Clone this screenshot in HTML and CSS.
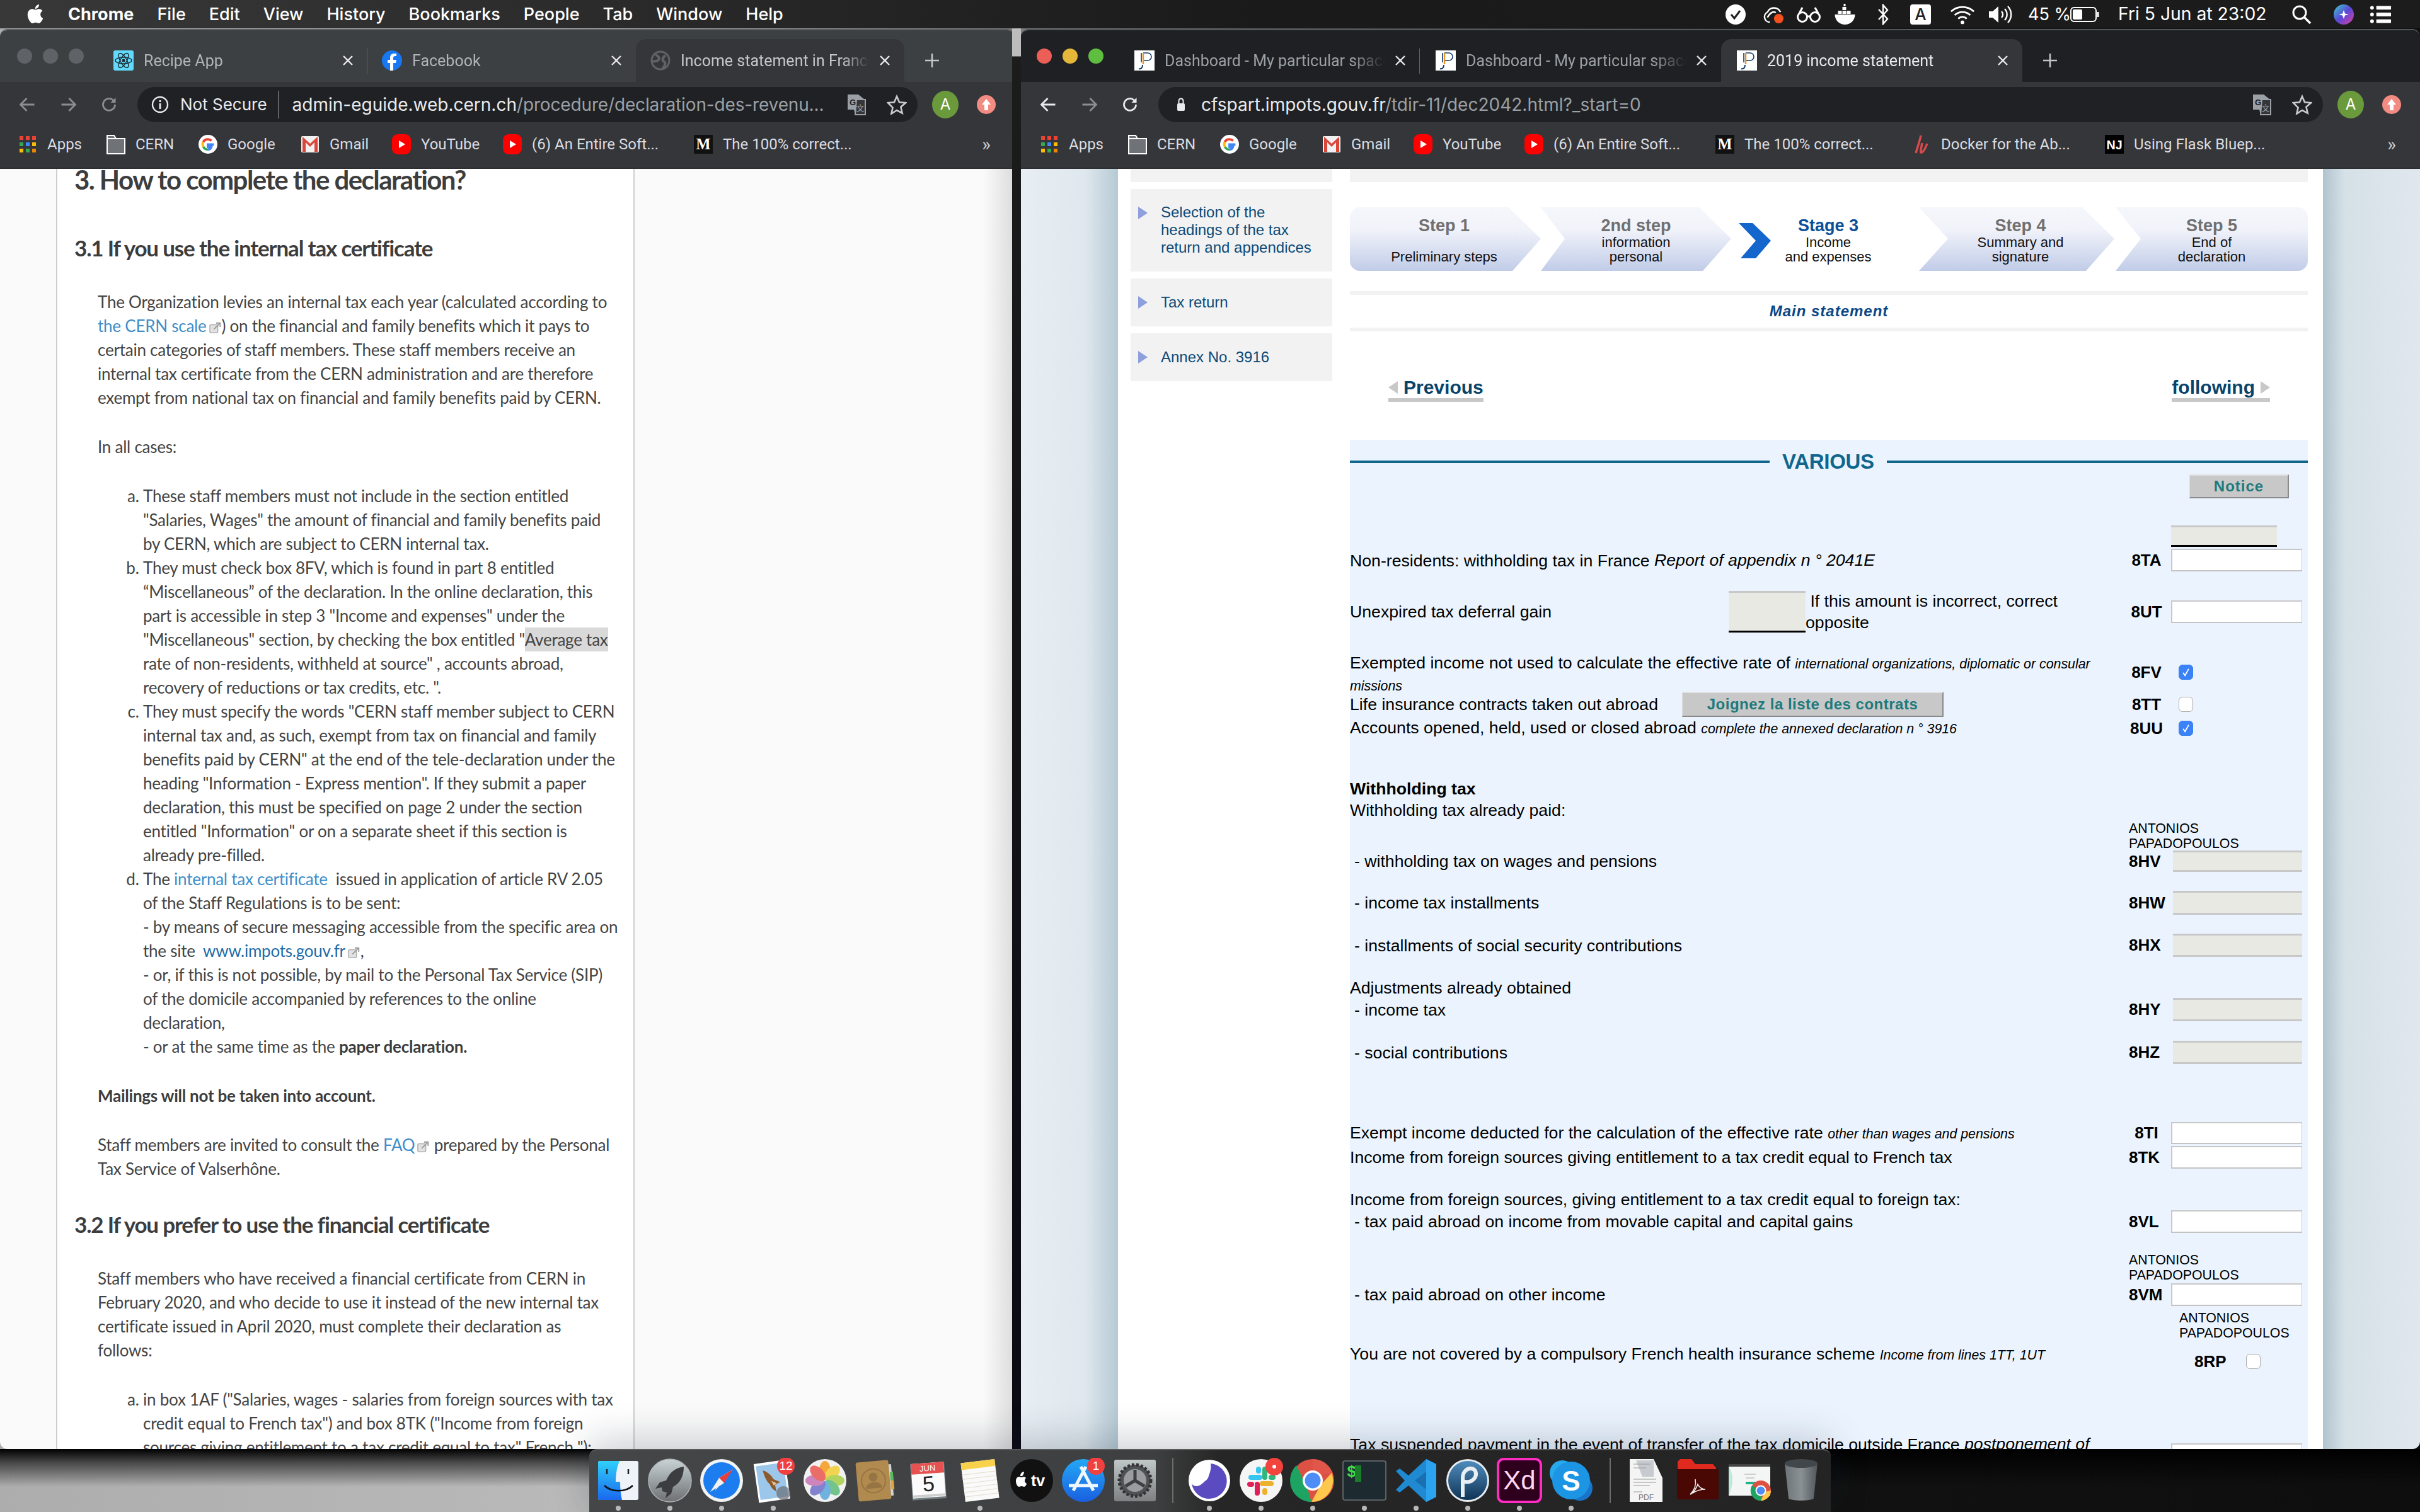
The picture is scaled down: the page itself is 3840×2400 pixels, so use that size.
FILE: index.html
```html
<!DOCTYPE html>
<html lang="en">
<head>
<meta charset="utf-8">
<title>Chrome windows</title>
<link rel="stylesheet" href="styles.css">
</head>
<body>
<svg class="defs" xmlns="http://www.w3.org/2000/svg">
  <symbol id="i-imp" viewBox="0 0 32 32"><rect width="32" height="32" fill="#fff"/><path d="M14 4h7a5 5 0 0 1 0 12h-7" fill="none" stroke="#123a6b" stroke-width="1.600"/><path d="M11 4v15" stroke="#123a6b" stroke-width="1.600"/><path d="M14 4v18" stroke="#e8951f" stroke-width="2.400"/><path d="M7 29c3 1 6-1 6-6" fill="none" stroke="#123a6b" stroke-width="2"/></symbol>
  <symbol id="i-x" viewBox="0 0 20 20"><path d="M3 3l14 14M17 3L3 17" stroke="currentColor" stroke-width="2.400" fill="none"/></symbol>
  <symbol id="i-plus" viewBox="0 0 26 26"><path d="M13 2v22M2 13h22" stroke="currentColor" stroke-width="2.600"/></symbol>
  <symbol id="i-back" viewBox="0 0 28 28"><path d="M25 14H4M13 4L3 14l10 10" fill="none" stroke="currentColor" stroke-width="2.800"/></symbol>
  <symbol id="i-fwd" viewBox="0 0 28 28"><path d="M3 14h21M15 4l10 10-10 10" fill="none" stroke="currentColor" stroke-width="2.800"/></symbol>
  <symbol id="i-reload" viewBox="0 0 28 28"><path d="M23 14a9.500 9.500 0 1 1-3-7l3 3" fill="none" stroke="currentColor" stroke-width="2.800"/><path d="M24 3v8h-8z" fill="currentColor"/></symbol>
  <symbol id="i-star" viewBox="0 0 32 32"><path d="M16 3l4 9.300 10 .9-7.600 6.600 2.300 9.800L16 25l-8.700 5.600 2.300-9.800L2 13.200l10-.9z" fill="none" stroke="currentColor" stroke-width="2.600"/></symbol>
  <symbol id="i-up" viewBox="0 0 30 30"><circle cx="15" cy="15" r="15" fill="#f28b82"/><path d="M15 6l7 9h-4v9h-6v-9H8z" fill="#fff"/></symbol>
  <symbol id="i-grid" viewBox="0 0 26 26"><g fill="#ea4335"><rect width="6" height="6"/><rect x="10" width="6" height="6"/><rect x="20" width="6" height="6"/></g><g><rect y="10" width="6" height="6" fill="#34a853"/><rect x="10" y="10" width="6" height="6" fill="#4285f4"/><rect x="20" y="10" width="6" height="6" fill="#fbbc04"/></g><g><rect y="20" width="6" height="6" fill="#fbbc04"/><rect x="10" y="20" width="6" height="6" fill="#34a853"/><rect x="20" y="20" width="6" height="6" fill="#ea8600"/></g></symbol>
  <symbol id="i-folder" viewBox="0 0 30 32"><path d="M1 2h11l3 5h14v24H1z" fill="#6f7377" stroke="#fff" stroke-width="2"/><path d="M1 7h28" stroke="#fff" stroke-width="2"/></symbol>
  <symbol id="i-g" viewBox="0 0 32 32"><circle cx="16" cy="16" r="16" fill="#fff"/><path d="M26 16.500H16v4h5.700c-.7 2.500-3 4.300-5.700 4.300" fill="none" stroke="#4285f4" stroke-width="4"/><path d="M16 25a9 9 0 0 1-8-5" fill="none" stroke="#34a853" stroke-width="4"/><path d="M8 20a9 9 0 0 1 0-8" fill="none" stroke="#fbbc04" stroke-width="4"/><path d="M8 12a9 9 0 0 1 14-2" fill="none" stroke="#ea4335" stroke-width="4"/></symbol>
  <symbol id="i-gm" viewBox="0 0 28 32"><rect y="3" width="28" height="26" rx="2" fill="#f1f1f1"/><path d="M2 4l12 11L26 4v24h-5V13l-7 7-7-7v15H2z" fill="#d9473a"/></symbol>
  <symbol id="i-yt" viewBox="0 0 30 32"><rect width="30" height="32" rx="9" fill="#f00"/><path d="M11 10l10 6-10 6z" fill="#fff"/></symbol>
  <symbol id="i-doc" viewBox="0 0 30 32"><path d="M14 2C12 12 8 22 6 30M16 14c-1 6-3 12-2 15 3 1 7-6 10-14" fill="none" stroke="#d64b4b" stroke-width="3.500"/></symbol>
  <symbol id="i-ext" viewBox="0 0 22 22"><rect x="1" y="6" width="14" height="14" rx="2" fill="#e2e2e2" stroke="#aaa" stroke-width="1.500"/><path d="M8 14L19 3M12 3h7v7" fill="none" stroke="#999" stroke-width="2"/></symbol>
  <symbol id="i-chk" viewBox="0 0 24 24"><path d="M7 13l3.500 5L17 6" fill="none" stroke="#fff" stroke-width="2"/></symbol>
</svg>

<header class="menubar">
  <svg class="apple" viewBox="0 0 24 24"><path fill="#fff" d="M12.152 6.896c-.948 0-2.415-1.078-3.96-1.04-2.04.027-3.91 1.183-4.961 3.014-2.117 3.675-.546 9.103 1.519 12.09 1.013 1.454 2.208 3.09 3.792 3.039 1.52-.065 2.09-.987 3.935-.987 1.831 0 2.35.987 3.96.948 1.637-.026 2.676-1.48 3.676-2.948 1.156-1.688 1.636-3.325 1.662-3.415-.039-.013-3.182-1.221-3.22-4.857-.026-3.04 2.48-4.494 2.597-4.559-1.429-2.09-3.623-2.324-4.39-2.376-2-.156-3.675 1.09-4.61 1.09zM15.53 3.83c.843-1.012 1.4-2.427 1.245-3.83-1.207.052-2.662.805-3.532 1.818-.78.896-1.454 2.338-1.273 3.714 1.338.104 2.715-.688 3.559-1.701"/></svg>
  <nav class="menus">
    <span class="app">Chrome</span><span>File</span><span>Edit</span><span>View</span><span>History</span><span>Bookmarks</span><span>People</span><span>Tab</span><span>Window</span><span>Help</span>
  </nav>
  <div class="status">
    <svg class="s32" viewBox="0 0 32 32"><circle cx="16" cy="16" r="16" fill="#fff"/><path d="M9 16l5 6 9-12" fill="none" stroke="#222" stroke-width="3"/></svg>
    <svg class="s38" viewBox="0 0 38 34"><path d="M14 30a9 9 0 0 1-4-17 12 12 0 0 1 22 0" fill="none" stroke="#fff" stroke-width="2.600"/><path d="M10 22c4-8 10-11 14-8" fill="none" stroke="#fff" stroke-width="2.600"/><circle cx="29" cy="24" r="8" fill="#f4511e"/></svg>
    <svg class="s38" viewBox="0 0 40 32"><circle cx="10" cy="20" r="7.500" fill="none" stroke="#fff" stroke-width="3"/><circle cx="30" cy="20" r="7.500" fill="none" stroke="#fff" stroke-width="3"/><path d="M17 19h6M5 14L10 5M35 14L30 5" stroke="#fff" stroke-width="3" fill="none"/></svg>
    <svg class="s34" viewBox="0 0 34 34"><path d="M1 17h32c0 9-7 16-16 16S1 26 1 17z" fill="#fff"/><g fill="#fff"><rect x="6" y="11" width="6" height="5"/><rect x="13" y="11" width="6" height="5"/><rect x="20" y="11" width="6" height="5"/><rect x="13" y="5" width="6" height="5"/><rect x="15" y="0" width="3" height="4"/></g></svg>
    <svg class="s20" viewBox="0 0 20 34"><path d="M3 9l14 15-7 8V2l7 8L3 25" fill="none" stroke="#fff" stroke-width="2.400"/></svg>
    <span class="abox">A</span>
    <svg class="s38" viewBox="0 0 42 32"><path d="M2 11a28 28 0 0 1 38 0M8 17a19 19 0 0 1 26 0M14 23a10 10 0 0 1 14 0" fill="none" stroke="#fff" stroke-width="3"/><circle cx="21" cy="29" r="3" fill="#fff"/></svg>
    <svg class="s38" viewBox="0 0 40 32"><path d="M2 11h6l9-8v26l-9-8H2z" fill="#fff"/><path d="M22 11a7 7 0 0 1 0 10M27 7a13 13 0 0 1 0 18M32 3a19 19 0 0 1 0 26" fill="none" stroke="#fff" stroke-width="2.400"/></svg>
    <span class="st-txt">45 %</span>
    <svg class="s44" viewBox="0 0 46 24"><rect x="1" y="1" width="40" height="22" rx="5" fill="none" stroke="#fff" stroke-width="2"/><rect x="4" y="4" width="15" height="16" rx="2" fill="#fff"/><path d="M44 8v8" stroke="#fff" stroke-width="3"/></svg>
    <span class="st-txt time">Fri 5 Jun at 23:02</span>
    <svg class="s32" viewBox="0 0 32 32"><circle cx="13" cy="13" r="10" fill="none" stroke="#fff" stroke-width="3"/><path d="M20 20l10 10" stroke="#fff" stroke-width="3.600"/></svg>
    <svg class="s32" viewBox="0 0 32 32"><defs><linearGradient id="siri" x1="0" y1="0" x2="1" y2="1"><stop offset="0" stop-color="#3ad0c8"/><stop offset=".5" stop-color="#5a48d8"/><stop offset="1" stop-color="#e0409c"/></linearGradient></defs><circle cx="16" cy="16" r="16" fill="url(#siri)"/><path d="M16 9l2 5.500 6 1.500-6 1.500-2 5.500-2-5.500-6-1.500 6-1.500z" fill="#fff"/></svg>
    <svg class="s34" viewBox="0 0 36 32"><g fill="#fff"><circle cx="4" cy="5" r="3"/><circle cx="4" cy="16" r="3"/><circle cx="4" cy="27" r="3"/><rect x="11" y="2" width="24" height="6" rx="1"/><rect x="11" y="13" width="24" height="6" rx="1"/><rect x="11" y="24" width="24" height="6" rx="1"/></g></svg>
  </div>
</header>

<main class="desktop">
  <section class="win win-left">
    <div class="strip">
      <div class="lights grey"><i></i><i></i><i></i></div>
      <div class="tab sep">
        <svg class="fav" viewBox="0 0 32 32"><rect width="32" height="32" rx="3" fill="#61dafb"/><g fill="none" stroke="#1c2b33" stroke-width="1.400"><ellipse cx="16" cy="16" rx="13" ry="5"/><ellipse cx="16" cy="16" rx="13" ry="5" transform="rotate(60 16 16)"/><ellipse cx="16" cy="16" rx="13" ry="5" transform="rotate(120 16 16)"/></g><circle cx="16" cy="16" r="2.500" fill="#1c2b33"/></svg>
        <span class="tab-t">Recipe App</span><svg class="x"><use href="#i-x"/></svg>
      </div>
      <div class="tab">
        <svg class="fav" viewBox="0 0 32 32"><circle cx="16" cy="16" r="16" fill="#1877f2"/><path d="M18 32V20h4l1-5h-5v-3c0-2 1-3 3-3h2V5h-4c-4 0-6 3-6 6v4h-4v5h4v12z" fill="#fff"/></svg>
        <span class="tab-t">Facebook</span><svg class="x"><use href="#i-x"/></svg>
      </div>
      <div class="tab active">
        <svg class="fav" viewBox="0 0 32 32"><circle cx="16" cy="16" r="14" fill="none" stroke="#5f6368" stroke-width="3"/><path d="M8 7c5 2 7 5 5 8s-6 1-10 3M24 8c-5 3-6 8-2 10 3 2 1 7-3 11" fill="none" stroke="#5f6368" stroke-width="4"/></svg>
        <span class="tab-t">Income statement in France</span><svg class="x"><use href="#i-x"/></svg>
      </div>
      <svg class="plus"><use href="#i-plus"/></svg>
    </div>
    <div class="toolbar">
      <svg class="nav dim"><use href="#i-back"/></svg><svg class="nav dim"><use href="#i-fwd"/></svg><svg class="nav dim"><use href="#i-reload"/></svg>
      <div class="omni">
        <svg class="o-ico" viewBox="0 0 28 28"><circle cx="14" cy="14" r="12" fill="none" stroke="#e8eaed" stroke-width="2.400"/><path d="M14 12v9M14 7v3" stroke="#e8eaed" stroke-width="2.800"/></svg>
        <span class="notsec">Not Secure</span>
        <span class="url"><b>admin-eguide.web.cern.ch</b><span class="tight">/procedure/declaration-des-revenu...</span></span>
        <div class="o-end"><svg class="o-a" viewBox="0 0 32 36"><path d="M2 2h17l10 8v24H14L12 26H2z" fill="#9aa0a6"/><path d="M16 10h14v24H14z" fill="#35363a" stroke="#9aa0a6" stroke-width="2"/><text x="10" y="19" class="tg">G</text><text x="22" y="28" class="tz">文</text></svg><svg class="o-a star"><use href="#i-star"/></svg></div>
      </div>
      <div class="avatar">A</div>
      <svg class="ext"><use href="#i-up"/></svg>
    </div>
    <div class="bookmarks">
      <a class="bm"><svg class="bi gr"><use href="#i-grid"/></svg><span class="t-apps">Apps</span></a>
      <a class="bm"><svg class="bi"><use href="#i-folder"/></svg><span class="t-cern">CERN</span></a>
      <a class="bm"><svg class="bi"><use href="#i-g"/></svg><span class="t-google">Google</span></a>
      <a class="bm"><svg class="bi"><use href="#i-gm"/></svg><span class="t-gmail">Gmail</span></a>
      <a class="bm"><svg class="bi"><use href="#i-yt"/></svg><span class="t-yt">YouTube</span></a>
      <a class="bm"><svg class="bi"><use href="#i-yt"/></svg><span class="t-soft">(6) An Entire Soft...</span></a>
      <a class="bm"><svg class="bi" viewBox="0 0 32 32"><rect width="32" height="32" fill="#111"/><text x="16" y="25" class="med">M</text></svg><span class="t-med">The 100% correct...</span></a>
      <span class="more">»</span>
    </div>
    <div class="lpage">
      <article class="col">
        <h1>3. How to complete the declaration?</h1>
        <h2>3.1 If you use the internal tax certificate</h2>
        <p>The Organization levies an internal tax each year (calculated according to<br><a href="#" class="lnk">the CERN scale</a><svg class="ex"><use href="#i-ext"/></svg>) on the financial and family benefits which it pays to<br>certain categories of staff members. These staff members receive an<br>internal tax certificate from the CERN administration and are therefore<br>exempt from national tax on financial and family benefits paid by CERN.</p>
        <p>In all cases:</p>
        <ol>
          <li>These staff members must not include in the section entitled<br>"Salaries, Wages" the amount of financial and family benefits paid<br>by CERN, which are subject to CERN internal tax.</li>
          <li>They must check box 8FV, which is found in part 8 entitled<br>“Miscellaneous” of the declaration. In the online declaration, this<br>part is accessible in step 3 "Income and expenses" under the<br>"Miscellaneous" section, by checking the box entitled "<mark>Average tax</mark><br>rate of non-residents, withheld at source" , accounts abroad,<br>recovery of reductions or tax credits, etc. ".</li>
          <li>They must specify the words "CERN staff member subject to CERN<br>internal tax and, as such, exempt from tax on financial and family<br>benefits paid by CERN" at the end of the tele-declaration under the<br>heading "Information - Express mention". If they submit a paper<br>declaration, this must be specified on page 2 under the section<br>entitled "Information" or on a separate sheet if this section is<br>already pre-filled.</li>
          <li>The <a href="#" class="lnk">internal tax certificate</a> &nbsp;issued in application of article RV 2.05<br>of the Staff Regulations is to be sent:<br>- by means of secure messaging accessible from the specific area on<br>the site &nbsp;<a href="#" class="lnk2">www.impots.gouv.fr</a><svg class="ex"><use href="#i-ext"/></svg>,<br>- or, if this is not possible, by mail to the Personal Tax Service (SIP)<br>of the domicile accompanied by references to the online<br>declaration,<br>- or at the same time as the <strong>paper declaration.</strong></li>
        </ol>
        <p><strong>Mailings will not be taken into account.</strong></p>
        <p>Staff members are invited to consult the <a href="#" class="lnk">FAQ</a><svg class="ex"><use href="#i-ext"/></svg> prepared by the Personal<br>Tax Service of Valserhône.</p>
        <h2 class="h2b">3.2 If you prefer to use the financial certificate</h2>
        <p>Staff members who have received a financial certificate from CERN in<br>February 2020, and who decide to use it instead of the new internal tax<br>certificate issued in April 2020, must complete their declaration as<br>follows:</p>
        <ol>
          <li>in box 1AF ("Salaries, wages - salaries from foreign sources with tax<br>credit equal to French tax") and box 8TK ("Income from foreign<br>sources giving entitlement to a tax credit equal to tax" French "):</li>
        </ol>
      </article>
      <div class="lshade"></div>
    </div>
  </section>

  <div class="divider"></div>

  <section class="win win-right">
    <div class="strip dark">
      <div class="lights"><i class="r"></i><i class="y"></i><i class="g"></i></div>
      <div class="tab wide sep"><svg class="fav"><use href="#i-imp"/></svg><span class="tab-t">Dashboard - My particular space</span><svg class="x"><use href="#i-x"/></svg></div>
      <div class="tab wide"><svg class="fav"><use href="#i-imp"/></svg><span class="tab-t">Dashboard - My particular space</span><svg class="x"><use href="#i-x"/></svg></div>
      <div class="tab wide active"><svg class="fav"><use href="#i-imp"/></svg><span class="tab-t bright">2019 income statement</span><svg class="x"><use href="#i-x"/></svg></div>
      <svg class="plus"><use href="#i-plus"/></svg>
    </div>
    <div class="toolbar">
      <svg class="nav"><use href="#i-back"/></svg><svg class="nav dim"><use href="#i-fwd"/></svg><svg class="nav"><use href="#i-reload"/></svg>
      <div class="omni">
        <svg class="o-ico" viewBox="0 0 28 28"><rect x="8" y="12" width="12" height="12" rx="2" fill="#e8eaed"/><path d="M10.500 12V8a3.500 3.500 0 0 1 7 0v4" fill="none" stroke="#e8eaed" stroke-width="2"/></svg>
        <span class="url"><b>cfspart.impots.gouv.fr</b>/tdir-11/dec2042.html?_start=0</span>
        <div class="o-end"><svg class="o-a" viewBox="0 0 32 36"><path d="M2 2h17l10 8v24H14L12 26H2z" fill="#9aa0a6"/><path d="M16 10h14v24H14z" fill="#35363a" stroke="#9aa0a6" stroke-width="2"/><text x="10" y="19" class="tg">G</text><text x="22" y="28" class="tz">文</text></svg><svg class="o-a star"><use href="#i-star"/></svg></div>
      </div>
      <div class="avatar">A</div>
      <svg class="ext"><use href="#i-up"/></svg>
    </div>
    <div class="bookmarks br">
      <a class="bm"><svg class="bi gr"><use href="#i-grid"/></svg><span class="t-apps">Apps</span></a>
      <a class="bm"><svg class="bi"><use href="#i-folder"/></svg><span class="t-cern">CERN</span></a>
      <a class="bm"><svg class="bi"><use href="#i-g"/></svg><span class="t-google">Google</span></a>
      <a class="bm"><svg class="bi"><use href="#i-gm"/></svg><span class="t-gmail">Gmail</span></a>
      <a class="bm"><svg class="bi"><use href="#i-yt"/></svg><span class="t-yt">YouTube</span></a>
      <a class="bm"><svg class="bi"><use href="#i-yt"/></svg><span class="t-soft">(6) An Entire Soft...</span></a>
      <a class="bm mw"><svg class="bi" viewBox="0 0 32 32"><rect width="32" height="32" fill="#111"/><text x="16" y="25" class="med">M</text></svg><span class="t-med">The 100% correct...</span></a>
      <a class="bm"><svg class="bi"><use href="#i-doc"/></svg><span class="t-doc">Docker for the Ab...</span></a>
      <a class="bm"><svg class="bi" viewBox="0 0 32 32"><rect width="32" height="32" fill="#000"/><text x="16" y="24" class="nj">NJ</text></svg><span class="t-med">Using Flask Bluep...</span></a>
      <span class="more">»</span>
    </div>
    <div class="rpage">
      <aside class="side">
        <div class="s-item s-top"></div>
        <div class="s-item s-1"><i class="tri"></i><span>Selection of the<br>headings of the tax<br>return and appendices</span></div>
        <div class="s-item s-2"><i class="tri"></i><span>Tax return</span></div>
        <div class="s-item s-2"><i class="tri"></i><span>Annex No. 3916</span></div>
      </aside>
      <div class="main">
        <div class="topbar"></div>
        <div class="steps">
          <div class="step st1"><b>Step 1</b><br>&nbsp;<br>Preliminary steps</div>
          <div class="step st2"><b>2nd step</b><br>information<br>personal</div>
          <div class="step st3"><svg class="chev" viewBox="0 0 51 56"><path d="M0 0h22l29 28-24 28H3l24-28z" fill="#1466cc"/></svg><b>Stage 3</b><br>Income<br>and expenses</div>
          <div class="step st4"><b>Step 4</b><br>Summary and<br>signature</div>
          <div class="step st5"><b>Step 5</b><br>End of<br>declaration</div>
        </div>
        <div class="stripe s-a"></div>
        <div class="mainst">Main statement</div>
        <div class="stripe"></div>
        <div class="pager">
          <a class="pg"><i class="tl"></i>Previous</a>
          <a class="pg">following<i class="tr"></i></a>
        </div>
        <section class="form">
          <h3 class="various"><span>VARIOUS</span></h3>
          <div class="notice-row"><button class="btn notice">Notice</button></div>
          <div class="row pre"><div class="f"><input class="in ro narrow" disabled></div></div>
          <div class="row r36 m3"><div class="tx">Non-residents: withholding tax in France <em class="em26">Report of appendix n ° 2041E</em></div><b class="code">8TA</b><div class="f"><input class="in"></div></div>
          <div class="row r66 m31"><div class="tx u"><span class="u-l">Unexpired tax deferral gain</span><input class="in ro ubox" disabled><span class="u-t">&nbsp;If this amount is incorrect, correct<br>opposite</span></div><b class="code">8UT</b><div class="f"><input class="in i36"></div></div>
          <div class="row r62 m32"><div class="tx lh33">Exempted income not used to calculate the effective rate of <em>international organizations, diplomatic or consular<br>missions</em></div><b class="code">8FV</b><div class="f"><span class="cb on"><svg><use href="#i-chk"/></svg></span></div></div>
          <div class="row r40"><div class="tx u"><span>Life insurance contracts taken out abroad</span><button class="btn join">Joignez la liste des contrats</button></div><b class="code">8TT</b><div class="f"><span class="cb"></span></div></div>
          <div class="row r36"><div class="tx">Accounts opened, held, used or closed abroad <em>complete the annexed declaration n ° 3916</em></div><b class="code">8UU</b><div class="f"><span class="cb on"><svg><use href="#i-chk"/></svg></span></div></div>
          <div class="row r34 m61"><div class="tx"><b>Withholding tax</b></div></div>
          <div class="row r34"><div class="tx">Withholding tax already paid:</div></div>
          <div class="names">ANTONIOS<br>PAPADOPOULOS</div>
          <div class="row r34"><div class="tx ind">- withholding tax on wages and pensions</div><b class="code l">8HV</b><div class="f"><input class="in ro shift" disabled></div></div>
          <div class="row r38 m30"><div class="tx ind">- income tax installments</div><b class="code l">8HW</b><div class="f"><input class="in ro shift" disabled></div></div>
          <div class="row r37 m30"><div class="tx ind">- installments of social security contributions</div><b class="code l">8HX</b><div class="f"><input class="in ro shift" disabled></div></div>
          <div class="row r32 m33"><div class="tx">Adjustments already obtained</div></div>
          <div class="row r37"><div class="tx ind">- income tax</div><b class="code l">8HY</b><div class="f"><input class="in ro shift" disabled></div></div>
          <div class="row r37 m31"><div class="tx ind">- social contributions</div><b class="code l">8HZ</b><div class="f"><input class="in ro shift" disabled></div></div>
          <div class="row r35 m92"><div class="tx">Exempt income deducted for the calculation of the effective rate <em>other than wages and pensions</em></div><b class="code">8TI</b><div class="f"><input class="in"></div></div>
          <div class="row r36 m3"><div class="tx">Income from foreign sources giving entitlement to a tax credit equal to French tax</div><b class="code l">8TK</b><div class="f"><input class="in"></div></div>
          <div class="row r34 m32"><div class="tx">Income from foreign sources, giving entitlement to a tax credit equal to foreign tax:</div></div>
          <div class="row r36"><div class="tx ind">- tax paid abroad on income from movable capital and capital gains</div><b class="code l">8VL</b><div class="f"><input class="in"></div></div>
          <div class="names n2">ANTONIOS<br>PAPADOPOULOS</div>
          <div class="row r36"><div class="tx ind">- tax paid abroad on other income</div><b class="code l">8VM</b><div class="f"><input class="in"></div></div>
          <div class="names n3">ANTONIOS<br>PAPADOPOULOS</div>
          <div class="row r64"><div class="tx up">You are not covered by a compulsory French health insurance scheme <em>Income from lines 1TT, 1UT</em></div><div class="f"><b class="code rp">8RP</b><span class="cb far"></span></div></div>
          <div class="row r36 m98"><div class="tx cut">Tax suspended payment in the event of transfer of the tax domicile outside France <em class="em26">postponement of</em></div><b class="code">8TW</b><div class="f"><input class="in"></div></div>
        </section>
      </div>
    </div>
  </section>
</main>

<footer class="dock">
  <div class="d"><svg viewBox="0 0 72 72"><defs><linearGradient id="fi" x1="0" y1="0" x2="0" y2="1"><stop offset="0" stop-color="#2fd0fb"/><stop offset="1" stop-color="#1a68ee"/></linearGradient></defs><rect x="4" y="5" width="64" height="62" rx="3" fill="#eef3f9"/><path d="M7 5h31c-5 12-6 24-6 33h7c0 10 1 20 3 29H7a3 3 0 0 1-3-3V8a3 3 0 0 1 3-3z" fill="url(#fi)"/><path d="M18 18v8M52 18v8" stroke="#222" stroke-width="2.500"/><path d="M14 44c11 11 34 11 45 0" fill="none" stroke="#111" stroke-width="2.500"/></svg><i class="dot"></i></div>
  <div class="d"><svg viewBox="0 0 72 72"><defs><linearGradient id="lp" x1="0" y1="0" x2="0" y2="1"><stop offset="0" stop-color="#c9d3d6"/><stop offset="1" stop-color="#6d7073"/></linearGradient></defs><circle cx="36" cy="36" r="34" fill="url(#lp)" stroke="#b0b4b6" stroke-width="1.500"/><path d="M58 14c-14 2-22 9-28 22l-10 3-7 10 10-2 1 6 7 2-2 9 9-7 3-11c12-6 17-18 17-32z" fill="#3b3d40"/></svg><i class="dot"></i></div>
  <div class="d"><svg viewBox="0 0 72 72"><circle cx="36" cy="36" r="34" fill="#f1f3f5"/><circle cx="36" cy="36" r="29" fill="#1c7df0"/><path d="M54 18L32 32l-6 20z" fill="#e8e8e8"/><path d="M54 18L40 40 32 32z" fill="#e93f3c"/><path d="M18 54l14-22 8 8z" fill="#f2f2f2"/></svg><i class="dot"></i></div>
  <div class="d"><svg viewBox="0 0 72 72"><g transform="rotate(-8 36 38)"><rect x="9" y="6" width="50" height="62" fill="#fff"/><rect x="12" y="10" width="44" height="54" fill="#9cc7ea"/><path d="M22 18c6 2 12 8 15 16l10 6c-5 1-7 3-9 3l1 11c-5-3-8-8-9-13-5-6-7-15-8-23z" fill="#8c5a2c"/><path d="M33 36l8 5-5 3z" fill="#e5c48f"/></g><circle cx="52" cy="56" r="11" fill="#6a6e75" opacity=".7"/><circle cx="56" cy="13" r="14" fill="#f04040"/><text x="56" y="19" class="badge">12</text></svg><i class="dot"></i></div>
  <div class="d"><svg viewBox="0 0 72 72"><circle cx="36" cy="36" r="34" fill="#f1f1f1"/><g opacity=".85"><ellipse cx="36" cy="20" rx="9" ry="15" fill="#f79b1c"/><ellipse cx="36" cy="20" rx="9" ry="15" fill="#f3cf36" transform="rotate(45 36 36)"/><ellipse cx="36" cy="20" rx="9" ry="15" fill="#a7cf48" transform="rotate(90 36 36)"/><ellipse cx="36" cy="20" rx="9" ry="15" fill="#5cbd7a" transform="rotate(135 36 36)"/><ellipse cx="36" cy="20" rx="9" ry="15" fill="#5aa8dc" transform="rotate(180 36 36)"/><ellipse cx="36" cy="20" rx="9" ry="15" fill="#6f70c8" transform="rotate(225 36 36)"/><ellipse cx="36" cy="20" rx="9" ry="15" fill="#c773b5" transform="rotate(270 36 36)"/><ellipse cx="36" cy="20" rx="9" ry="15" fill="#e9564f" transform="rotate(315 36 36)"/></g></svg></div>
  <div class="d"><svg viewBox="0 0 72 72"><g transform="rotate(-5 36 36)"><rect x="54" y="12" width="7" height="50" fill="#cfd3d6"/><rect x="58" y="24" width="5" height="14" fill="#5cb85c"/><rect x="58" y="38" width="5" height="14" fill="#e2a43b"/><rect x="5" y="5" width="52" height="62" rx="3" fill="#b18a4f"/><circle cx="31" cy="36" r="19" fill="none" stroke="#977443" stroke-width="2"/><circle cx="31" cy="30" r="7" fill="#977443"/><path d="M18 48a13 10 0 0 1 26 0z" fill="#977443"/></g></svg></div>
  <div class="d"><svg viewBox="0 0 72 72"><g transform="rotate(-4 36 36)"><rect x="9" y="8" width="54" height="58" fill="#6f7b80"/><rect x="10" y="8" width="52" height="55" fill="#fbfbfb"/><rect x="10" y="8" width="52" height="17" fill="#e65252"/><text x="36" y="21" class="cal-m">JUN</text><text x="36" y="53" class="cal-d">5</text><rect x="10" y="58" width="52" height="4" fill="#cdcdcd"/></g></svg></div>
  <div class="d"><svg viewBox="0 0 72 72"><g transform="rotate(-7 36 36)"><rect x="9" y="5" width="54" height="62" fill="#fafafa"/><rect x="9" y="5" width="54" height="11" fill="#f8d24b"/><path d="M9 24h54M9 31h54M9 38h54M9 45h54M9 52h54M9 59h54" stroke="#e5e0cf" stroke-width="1.200"/></g></svg><i class="dot"></i></div>
  <div class="d"><svg viewBox="0 0 72 72"><circle cx="36" cy="36" r="34" fill="#111"/><path d="M21 29c2-2 3-5 3-7-2 0-4 1-5 3s-1 3-1 4zM24 30c-2 0-3 1-4 1s-2-1-4-1c-3 0-5 3-5 7 0 5 3 9 5 9 1 0 2-1 4-1s3 1 4 1c2 0 4-4 4-5-2-1-3-3-3-5s1-3 2-4c-1-1-2-2-3-2z" fill="#fff"/><text x="46" y="45" class="tv">tv</text></svg></div>
  <div class="d"><svg viewBox="0 0 72 72"><defs><linearGradient id="as" x1="0" y1="0" x2="0" y2="1"><stop offset="0" stop-color="#24a8f6"/><stop offset="1" stop-color="#1a5fe0"/></linearGradient></defs><circle cx="36" cy="36" r="34" fill="url(#as)"/><path d="M40 14L20 52M32 14l20 38M13 44h46" stroke="#eef6ff" stroke-width="5" fill="none"/><circle cx="56" cy="13" r="14" fill="#f04040"/><text x="56" y="19" class="badge">1</text></svg></div>
  <div class="d"><svg viewBox="0 0 72 72"><defs><linearGradient id="pr" x1="0" y1="0" x2="0" y2="1"><stop offset="0" stop-color="#c0c8c8"/><stop offset="1" stop-color="#7e8082"/></linearGradient></defs><rect x="3" y="3" width="66" height="66" rx="3" fill="url(#pr)"/><circle cx="36" cy="36" r="25" fill="#4f5255" stroke="#333" stroke-width="5" stroke-dasharray="4 3"/><circle cx="36" cy="36" r="18" fill="#9a9da0"/><path d="M36 36V19M36 36l15 9M36 36l-15 9" stroke="#3d3f42" stroke-width="5"/></svg></div>
  <div class="dsep"></div>
  <div class="d"><svg viewBox="0 0 72 72"><circle cx="36" cy="36" r="33" fill="#fff"/><path d="M38 9a28 28 0 1 1-30 32c3 5 9 5 14 2 12-8 18-22 16-34z" fill="#5a4cc0"/><circle cx="24" cy="27" r="11" fill="#fff"/></svg><i class="dot"></i></div>
  <div class="d"><svg viewBox="0 0 72 72"><circle cx="36" cy="36" r="34" fill="#f5f5f5"/><g stroke-width="8" stroke-linecap="round"><path d="M20 31h14" stroke="#36c5f0"/><path d="M42 18v13" stroke="#2eb67d"/><path d="M52 41H38" stroke="#ecb22e"/><path d="M30 56V42" stroke="#e01e5a"/><path d="M32 18v3" stroke="#36c5f0"/><path d="M52 31h3" stroke="#2eb67d"/><path d="M42 52v3" stroke="#ecb22e"/><path d="M18 42h3" stroke="#e01e5a"/></g><circle cx="57" cy="14" r="14" fill="#f2433c"/><circle cx="57" cy="14" r="3" fill="#fff"/></svg><i class="dot"></i></div>
  <div class="d"><svg viewBox="0 0 72 72"><circle cx="36" cy="36" r="34" fill="#dd5144"/><path d="M36 2a34 34 0 0 1 32 24H36z" fill="#e0574a"/><path d="M66 24a34 34 0 0 1-32 46l14-26z" fill="#fdc84b"/><path d="M34 70A34 34 0 0 1 10 12l16 32z" fill="#1da462"/><circle cx="36" cy="36" r="16" fill="#fff"/><circle cx="36" cy="36" r="12.500" fill="#4e8df5"/></svg><i class="dot"></i></div>
  <div class="d"><svg viewBox="0 0 72 72"><rect x="2" y="5" width="68" height="62" rx="3" fill="#1d2a30" stroke="#6d7478" stroke-width="1.500"/><text x="8" y="30" class="term">$</text><rect x="21" y="12" width="10" height="26" fill="#1b7c2c"/></svg><i class="dot"></i></div>
  <div class="d"><svg viewBox="0 0 72 72"><path d="M52 2l16 8v52l-16 8L24 44 10 55l-6-4 14-15L4 21l6-4 14 11z" fill="#1f8ad2"/><path d="M52 2l16 8v52l-16 8z" fill="#2ba3ef"/><path d="M52 22v28L34 36z" fill="#1a6fb0"/></svg><i class="dot"></i></div>
  <div class="d"><svg viewBox="0 0 72 72"><defs><linearGradient id="pc" x1="0" y1="0" x2="0" y2="1"><stop offset="0" stop-color="#4e8cbc"/><stop offset="1" stop-color="#103356"/></linearGradient></defs><circle cx="36" cy="36" r="34" fill="#e6ecef"/><circle cx="36" cy="36" r="31" fill="url(#pc)"/><path d="M28 62V32c0-10 7-16 14-15 7 1 9 9 5 15-5 7-14 8-19 4" fill="none" stroke="#e8eef2" stroke-width="6"/></svg><i class="dot"></i></div>
  <div class="d"><svg viewBox="0 0 72 72"><rect x="2" y="2" width="68" height="68" rx="9" fill="#2e001e" stroke="#ff2bc2" stroke-width="4"/><text x="36" y="50" class="xd">Xd</text></svg><i class="dot"></i></div>
  <div class="d"><svg viewBox="0 0 72 72"><circle cx="22" cy="24" r="20" fill="#27a9ec"/><circle cx="50" cy="48" r="20" fill="#1a74c9"/><circle cx="36" cy="36" r="30" fill="#1c95e4"/><text x="36" y="52" class="sk">S</text></svg><i class="dot"></i></div>
  <div class="dsep s2"></div>
  <div class="d"><svg viewBox="0 0 72 72"><path d="M10 2h38l14 30v38H10z" fill="#f4f4f4"/><path d="M20 4h28v26H30z" fill="#c7cbd0"/><path d="M16 10h26M16 16h20M16 34h36M16 39h36M16 44h26M16 54h14" stroke="#9a9a9a" stroke-width="1.200"/><text x="36" y="67" class="pdf">PDF</text></svg></div>
  <div class="d"><svg viewBox="0 0 72 72"><path d="M4 22V6l4-4h18l6 8h28l5 6v12z" fill="#e0291f"/><rect x="3" y="18" width="66" height="48" fill="#4a0805"/><path d="M32 34c2 10-2 18-8 24 5-2 10-10 12-16 3 6 7 8 12 8-6 0-14 2-20 6" fill="none" stroke="#eee" stroke-width="1.600"/></svg></div>
  <div class="d"><svg viewBox="0 0 72 72"><rect x="3" y="10" width="66" height="50" fill="#f4f6f6"/><rect x="3" y="10" width="66" height="4" fill="#444"/><path d="M3 14c8 10 8 30 0 46z" fill="#bfe8dc"/><rect x="30" y="38" width="22" height="4" fill="#1fb286"/><path d="M28 26h18M30 32h14" stroke="#aaa" stroke-width="1.200"/><circle cx="54" cy="52" r="16" fill="#dd5144"/><path d="M54 68a16 16 0 0 1-14-24l14 8z" fill="#1da462"/><path d="M70 52a16 16 0 0 1-16 16l7-14z" fill="#fdc84b"/><circle cx="54" cy="52" r="7.500" fill="#4e8df5" stroke="#fff" stroke-width="2"/></svg></div>
  <div class="d"><svg viewBox="0 0 72 72"><defs><linearGradient id="tr" x1="0" y1="0" x2="1" y2="0"><stop offset="0" stop-color="#6d7579"/><stop offset=".5" stop-color="#8a9094"/><stop offset="1" stop-color="#50565a"/></linearGradient></defs><path d="M10 8h52l-6 56c-1 5-39 5-40 0z" fill="url(#tr)"/><ellipse cx="36" cy="9" rx="26" ry="7" fill="#41474b"/></svg></div>
</footer>
</body>
</html>
```
FILE: styles.css
```css
* { box-sizing: border-box; }
html, body { margin: 0; padding: 0; }
body {
  width: 3840px; height: 2400px; overflow: hidden; position: relative;
  background: linear-gradient(90deg, #adadad 0, #b9b9b9 900px, #111 2905px, #0e0e0e 100%);
  font-family: "Liberation Sans", Arial, sans-serif;
}
.defs { display: block; width: 0; height: 0; }
/* menu bar */
.menubar {
  position: relative; z-index: 3;
  height: 45px; display: flex; align-items: center; color: #fff;
  background: linear-gradient(90deg, #383838 0, #2a2a2a 1000px, #1a1a1a 2000px, #1c1c1c 100%);
  font: 500 27px/45px Inter, sans-serif;
}
.apple { width: 30px; height: 32px; margin: -2px 0 0 41px; }
.menus { display: flex; gap: 37px; margin-left: 37px; }
.menus .app { font-weight: 700; }
.status {
  margin-left: auto; display: grid; align-items: center; justify-items: start;
  grid-template-columns: 55px 57px 60px 68px 53px 63px 60px 64px 67px 76px 275px 67px 57px 80px;
}
.status svg { display: block; }
.s20 { width: 20px; height: 34px; } .s32 { width: 32px; height: 32px; } .s34 { width: 35px; height: 34px; }
.s38 { width: 40px; height: 32px; } .s44 { width: 46px; height: 24px; }
.abox { width: 33px; height: 32px; background: #fff; color: #222; border-radius: 4px; text-align: center; font: 500 26px/32px Inter, sans-serif; }
.st-txt { font: 400 27px/45px Inter, sans-serif; white-space: nowrap; }
.st-txt.time { font-size: 28.300px; }
/* windows */
.desktop { position: absolute; left: 0; right: 0; top: 45px; height: 2255px; }
.desktop::after {
  content: ""; position: absolute; left: 0; right: 0; top: 2255px; height: 60px;
  background: linear-gradient(180deg, #000 0, rgba(0,0,0,.6) 35%, rgba(0,0,0,0) 100%);
}
.win { position: absolute; top: 1px; bottom: 0; display: flex; flex-direction: column; overflow: hidden; border-top: 2px solid #6a6d70; }
.win-left { left: 0; width: 1610px; border-radius: 12px 12px 0 12px; border-top-color: #5e6164; }
.win-right { left: 1620px; right: 0; border-radius: 12px 12px 12px 0; border-top-color: #55585c; }
.divider { position: absolute; left: 1606px; top: 0; width: 14px; bottom: 0; background: linear-gradient(180deg, #bdbdbd 0, #bdbdbd 44px, #1c1c1c 45px, #0a0a14 100%); }
.strip { height: 82px; flex: none; display: flex; background: #3d4043; position: relative; color: #9aa0a6; }
.strip.dark { background: #1f2023; }
.lights { width: 157px; display: flex; gap: 17px; padding: 29px 0 0 27px; flex: none; }
.lights i { width: 24px; height: 24px; border-radius: 50%; background: #5f6367; display: block; }
.dark .lights { gap: 17px; width: 155px; padding-left: 25px; }
.lights .r { background: #ec5f57; } .lights .y { background: #e4b73a; } .lights .g { background: #5fbe3f; }
.tab {
  width: 426px; height: 68px; margin-top: 14px; flex: none; position: relative;
  display: flex; align-items: center; padding: 0 0 0 23px; font: 400 25px/1 Roboto, sans-serif; color: #b0b4b8;
}
.tab.wide { width: 478px; padding-left: 25px; }
.dark .tab { color: #9aa0a6; }
.tab.sep::after { content: ""; position: absolute; right: 0; top: 15px; height: 40px; width: 1px; background: #5f6368; }
.tab.active { background: #35363a; border-radius: 16px 16px 0 0; color: #c4c7ca; }
.fav { width: 32px; height: 32px; flex: none; }
.tab-t {
  margin-left: 16px; width: 300px; white-space: nowrap; overflow: hidden;
  -webkit-mask-image: linear-gradient(90deg, #000 85%, transparent 100%);
  mask-image: linear-gradient(90deg, #000 85%, transparent 100%);
}
.wide .tab-t { width: 350px; }
.tab-t.bright { color: #e8eaed; }
.x { position: absolute; right: 21px; top: 24px; width: 20px; height: 20px; color: #e8eaed; }
.plus { width: 26px; height: 26px; margin: 35px 0 0 31px; color: #c3c6c9; }
.toolbar { height: 68px; flex: none; display: flex; align-items: center; padding: 4px 13px 0 11px; background: #35363a; }
.nav { width: 65px; height: 28px; color: #e8eaed; flex: none; }
.nav.dim { color: #8a8d91; }
.omni {
  flex: 1; height: 56px; margin: 0 12px 0 12px; border-radius: 28px; background: #202124; min-width: 0;
  display: flex; align-items: center; padding: 0 17px 0 22px; font: 400 28px/56px Inter, sans-serif;
}
.o-ico { width: 28px; height: 28px; margin-right: 18px; flex: none; }
.notsec { color: #e8eaed; font-size: 26px; padding-right: 17px; border-right: 2px solid #5f6368; line-height: 44px; height: 44px; margin-right: 21px; white-space: nowrap; }
.url { color: #9aa0a6; white-space: nowrap; }
.url b { color: #e8eaed; font-weight: 400; }
.url .tight { letter-spacing: -.15px; }
.o-end { margin-left: auto; display: flex; align-items: center; gap: 32px; }
.o-a { width: 32px; height: 36px; color: #e8eaed; }
.o-a.star { height: 32px; color: #c8cbce; }
.tg { font: 700 13px "Liberation Sans", sans-serif; text-anchor: middle; fill: #202124; }
.tz { font: 400 13px "Noto Sans CJK SC", sans-serif; text-anchor: middle; fill: #9aa0a6; }
.med { font: 700 26px "Liberation Serif", serif; text-anchor: middle; fill: #fff; }
.nj { font: 700 21px "Liberation Sans", sans-serif; text-anchor: middle; fill: #fff; }
.avatar { width: 42px; height: 44px; margin: 0 11px; border-radius: 50%; flex: none; background: #6b9a3c; color: #fff; font: 400 24px/44px Inter, sans-serif; text-align: center; }
.ext { width: 30px; height: 32px; margin: 0 17px 0 18px; flex: none; }
.bookmarks { height: 70px; flex: none; display: flex; align-items: center; padding: 0 0 6px 29px; background: #35363a; color: #dadce0; font: 400 24px/32px Roboto, sans-serif; border-bottom: 2px solid #2d2e31; }
.bookmarks.br { padding-left: 30px; }
.bm { display: flex; align-items: center; gap: 16px; margin-right: 36px; white-space: nowrap; }
.bm.mw { margin-right: 46px; }
.bi { width: 30px; height: 32px; flex: none; }
.bi.gr { width: 30px; height: 26px; }
.t-apps { width: 58px; } .t-cern { width: 64px; } .t-google { width: 80px; } .t-gmail { width: 63px; } .t-yt { width: 94px; } .t-soft { width: 221px; } .t-med { width: 220px; } .t-doc { width: 224px; }
.more { margin-left: auto; padding-right: 38px; font-size: 30px; color: #c8cbce; }
/* left page */
.lpage { flex: 1; min-height: 0; display: flex; overflow: hidden; background: #fafafa; position: relative; }
.lshade { position: absolute; right: 0; top: 0; bottom: 0; width: 50px; background: linear-gradient(90deg, rgba(0,0,0,0), rgba(0,0,0,.12)); }
.col {
  margin: -8px 0 0 89px; width: 918px; padding: 0 0 0 27px; background: #fff; flex: none;
  border: solid #cfcfcf; border-width: 0 2px; color: #444; font: 400 26px/38px Lato, sans-serif; letter-spacing: -.24px; white-space: nowrap;
}
.col h1 { margin: 0; font: 700 42px/50px Lato, sans-serif; letter-spacing: -1.570px; color: #3d3d3d; }
.col h2 { margin: 60px 0 0; font: 700 35px/46px Lato, sans-serif; letter-spacing: -1.160px; color: #3d3d3d; }
.col h2.h2b { margin-top: 46px; }
.col p { margin: 40px 0 0 37px; }
.col h2 + p { margin-top: 44px; }
.col ol { margin: 40px 0 0 37px; padding: 0 0 0 72px; list-style: lower-alpha; }
.col strong { font-weight: 700; color: #3d3d3d; }
.col mark { background: #d9d9d9; color: inherit; display: inline-block; }
.lnk { color: #3f8ec9; text-decoration: none; }
.lnk2 { color: #1f6ca6; text-decoration: none; }
.ex { width: 20px; height: 20px; margin-left: 4px; vertical-align: -3px; }
/* right page */
.rpage {
  flex: 1; min-height: 0; overflow: hidden; display: flex; align-items: flex-start; padding: 0 24px 0 20px; margin: 0;
  background:
    linear-gradient(90deg, #e8eef3 0, #dfe8ee 100px, #b6cad4 154px, #fff 154px, #fff 2066px, #b0c4ce 2066px, #d5e0e7 2100px, #e0e8ee 100%);
}
.side { width: 320px; margin: 0 28px 0 154px; flex: none; color: #0d4a78; font-size: 24px; line-height: 28px; }
.s-item { background: #f2f2f2; display: flex; align-items: center; padding-left: 12px; margin-bottom: 11px; }
.s-top { height: 21px; }
.s-1 { height: 131px; align-items: flex-start; padding-top: 23px; } .s-2 { height: 76px; }
.tri { width: 0; height: 0; border-left: 15px solid #8d9fdc; border-top: 10px solid transparent; border-bottom: 10px solid transparent; margin-right: 21px; flex: none; }
.s-1 .tri { margin-top: 5px; }
.main { width: 1520px; flex: none; margin-left: 0; }
.topbar { height: 21px; background: #f2f2f2; }
.steps { display: flex; margin-top: 40px; height: 101px; }
.step {
  position: relative; height: 101px; padding-top: 14px; text-align: center; font-size: 22px; line-height: 23px; color: #111; flex: none;
  background: linear-gradient(180deg, #f6f7fc 0, #f1f3fa 35%, #c1cce8 100%);
}
.step b { font-size: 27px; line-height: 30px; color: #707070; }
.st1 { width: 303px; border-radius: 16px 0 0 16px; clip-path: polygon(0 0, 252px 0, 303px 50px, 258px 101px, 0 101px); padding-right: 4px; }
.st2 { width: 302px; clip-path: polygon(0 0, 251px 0, 302px 50px, 257px 101px, 0 101px, 38px 50px); }
.st3 { width: 298px; background: none; padding-left: 10px; }
.st3 b { color: #0c4f96; }
.chev { position: absolute; left: 12px; top: 25px; width: 51px; height: 56px; }
.st4 { width: 310px; margin-right: 2px; padding-left: 12px; clip-path: polygon(0 0, 259px 0, 310px 50px, 265px 101px, 0 101px, 46px 50px); }
.st5 { width: 305px; border-radius: 0 16px 16px 0; clip-path: polygon(0 0, 100% 0, 100% 100%, 0 100%, 40px 50px); }
.stripe { height: 6px; background: #f2f2f2; }
.s-a { margin-top: 32px; }
.mainst { height: 52px; text-align: center; font: italic 700 24px/52px "Liberation Sans", sans-serif; letter-spacing: 1px; color: #0c4785; padding-left: 0; }
.pager { display: flex; justify-content: space-between; padding: 0 60px 0 61px; margin-top: 64px; height: 48px; }
.pg { display: flex; align-items: center; height: 48px; padding-top: 8px; border-bottom: 6px solid #c8c8c8; font: 700 30px/34px "Liberation Sans", sans-serif; color: #084369; }
.tl { width: 0; height: 0; border-right: 15px solid #c8c8c8; border-top: 10px solid transparent; border-bottom: 10px solid transparent; margin-right: 9px; }
.tr { width: 0; height: 0; border-left: 15px solid #c8c8c8; border-top: 10px solid transparent; border-bottom: 10px solid transparent; margin-left: 9px; }
.form { margin-top: 60px; background: #ebf4fe; padding: 14px 9px 0 0; color: #000; font-size: 26.670px; height: 1700px; }
.various { margin: 0 -9px 0 0; height: 41px; display: flex; align-items: center; font: 700 33px/41px "Liberation Sans", sans-serif; color: #11668e; }
.various::before, .various::after { content: ""; height: 4px; background: #11668e; flex: 1; }
.various::before { flex: none; width: 666px; }
.various span { padding: 0 20px; letter-spacing: -.3px; }
.notice-row { display: flex; justify-content: flex-end; height: 38px; padding-right: 21px; }
.btn { border: 0; background: #c8c8c8; border-top: 2px solid #e2e2e2; border-bottom: 2px solid #8a8a8a; border-right: 2px solid #8a8a8a; border-left: 1px solid #ddd; font: 700 24px/1 "Liberation Sans", sans-serif; color: #1f7a7c; padding: 0; }
.notice { width: 158px; height: 38px; letter-spacing: 1px; }
.join { width: 415px; height: 40px; margin-left: 38px; letter-spacing: .5px; }
.row { display: flex; align-items: center; white-space: nowrap; }
.pre { height: 34px; margin-top: 43px; justify-content: flex-end; }
.r32 { height: 32px; } .r34 { height: 34px; } .r35 { height: 35px; } .r36 { height: 36px; } .r37 { height: 37px; } .r38 { height: 38px; } .r40 { height: 40px; } .r62 { height: 62px; } .r64 { height: 64px; } .r66 { height: 66px; }
.m3 { margin-top: 3px; } .m30 { margin-top: 30px; } .m31 { margin-top: 31px; } .m32 { margin-top: 32px; } .m33 { margin-top: 33px; } .m61 { margin-top: 61px; } .m92 { margin-top: 92px; } .m98 { margin-top: 98px; }
.tx { flex: 1; min-width: 0; line-height: 34px; }
.tx em { font-size: 21.330px; }
.tx em.em26 { font-size: 26.670px; vertical-align: 1px; }
.tx.lh33 { line-height: 33px; align-self: flex-start; }
.tx.u { display: flex; align-items: center; }
.u-l { width: 601px; flex: none; }
.ind { padding-left: 7px; }
.up { padding-bottom: 22px; margin-right: 69px; }
.cut { align-self: flex-start; margin-top: -16px; }
.code { width: 60px; margin-right: 9px; text-align: center; flex: none; font-size: 26px; }
.code.l { text-align: left; padding-left: 2px; }
.code.rp { width: auto; margin: 0 31px 0 37px; }
.f { width: 208px; flex: none; display: flex; height: 100%; align-items: center; }
.in { width: 100%; height: 100%; background: #fff; border: solid #c8c8c8; border-width: 2px 1px 2px 2px; border-bottom-color: #c4c4c4; padding: 0; margin: 0; display: block; }
.in.i36 { height: 36px; }
.in.ro { background: #e9e9e4; border-width: 3px 0 3px 0; border-color: #c8c8c8; opacity: 1; }
.in.ubox { width: 122px; height: 66px; flex: none; border-bottom-color: #000; }
.in.narrow { width: 168px; border-bottom-color: #000; }
.pre .f { justify-content: flex-start; }
.in.shift { margin-left: 3px; width: 206px; }
.cb { display: block; width: 23px; height: 24px; border-radius: 6px; background: #fff; border: 1px solid #aaa; margin-left: 12px; flex: none; }
.cb.on { background: #3b82f6; border-color: #3b82f6; }
.cb svg { display: block; width: 21px; height: 22px; }
.cb.far { margin-left: 0; }
.names { font-size: 21.330px; line-height: 24px; height: 47px; padding-left: 1236px; white-space: nowrap; }
.n2 { height: 49px; margin-top: 31px; }
.n3 { height: 49px; margin-top: 7px; padding-left: 1316px; }
/* dock */
.dock {
  position: absolute; left: 935px; bottom: 0; width: 1970px; height: 100px; z-index: 4;
  display: flex; padding: 12px 5px 0; border-radius: 12px 12px 0 0;
  background: linear-gradient(90deg, #454647 0, #3e3f40 900px, #262626 1000px, #242424 100%);
  border-top: 2px solid #5a5a5a; box-shadow: 0 -14px 60px rgba(20,30,50,.22);
}
.d { width: 82px; flex: none; display: flex; flex-direction: column; align-items: center; position: relative; }
.d svg { width: 72px; height: 72px; display: block; flex: none; }
.dot { width: 8px; height: 8px; border-radius: 50%; background: #b8b8b8; margin-top: 4px; display: block; }
.dsep { width: 2px; height: 72px; background: #6b6b6b; margin: 0 16px 0 18px; flex: none; }
.dsep.s2 { margin: 0 15px 0 20px; }
.badge { font: 400 19px "Liberation Sans", sans-serif; fill: #fff; text-anchor: middle; }
.cal-m { font: 400 13px "Liberation Sans", sans-serif; fill: #fff; text-anchor: middle; }
.cal-d { font: 300 34px "Liberation Sans", sans-serif; fill: #222; text-anchor: middle; }
.tv { font: 700 25px "Liberation Sans", sans-serif; fill: #fff; text-anchor: middle; }
.term { font: 700 26px "Liberation Mono", monospace; fill: #3de04a; }
.xd { font: 400 42px "Liberation Sans", sans-serif; fill: #ffd6f1; text-anchor: middle; }
.sk { font: 700 44px "Liberation Sans", sans-serif; fill: #fff; text-anchor: middle; }
.pdf { font: 400 12px "Liberation Sans", sans-serif; fill: #777; text-anchor: middle; }
```
